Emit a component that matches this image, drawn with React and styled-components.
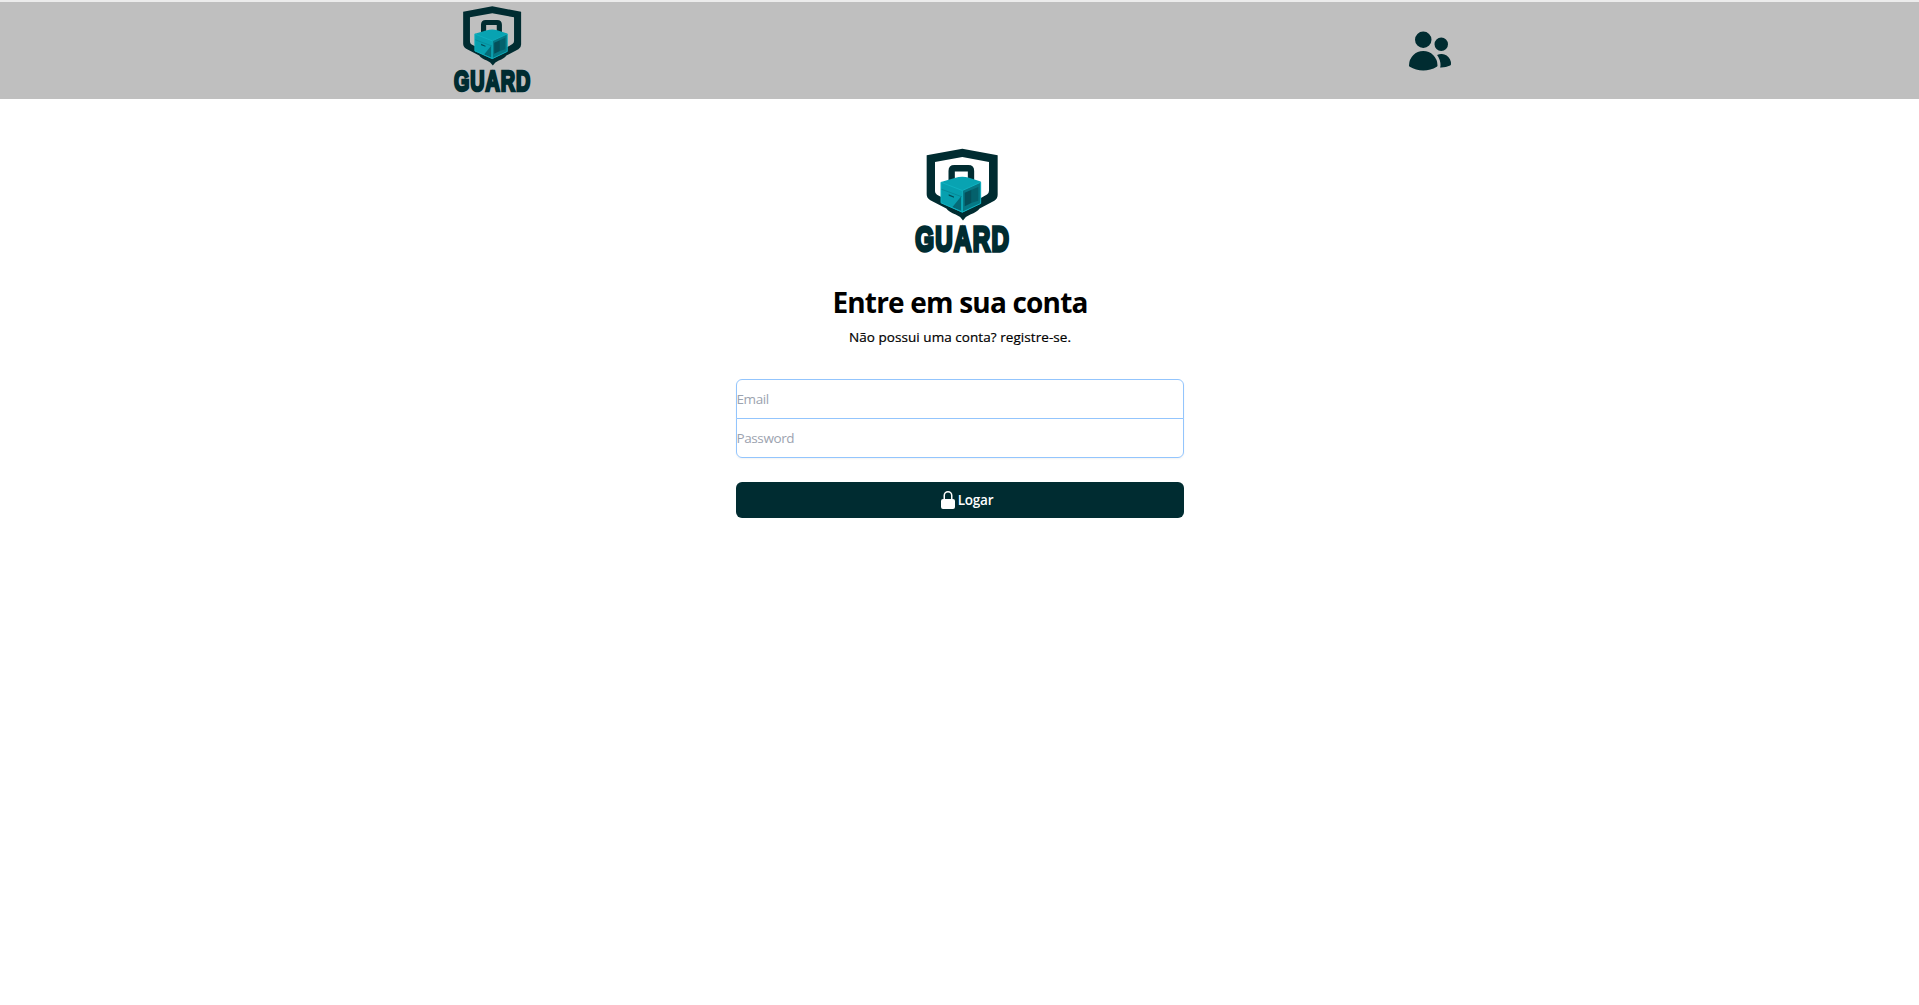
import React from "react";
import styled, { createGlobalStyle } from "styled-components";
import { HiUsers } from "react-icons/hi2";

const ink = "#002c31";

const GlobalStyle = createGlobalStyle`
  *, *::before, *::after { box-sizing: border-box; }
  body { margin: 0; background: #fff; color: #000; font-family: "Open Sans", "Noto Sans", sans-serif; }
  h1, p { margin: 0; }
`;

const Header = styled.header`
  display: flex;
  justify-content: space-between;
  align-items: center;
  height: 99px;
  padding: 0 465px 0 452px;
  border-top: 2px solid #ececec;
  background: #bfbfbf;
  color: ${ink};
`;

const HeaderLogo = styled.div`
  padding-top: 2px;
`;

const LogoSvg = styled.svg`
  display: block;
  width: ${(p) => p.$width}px;
  height: ${(p) => p.$height}px;
`;

const Main = styled.main`
  display: flex;
  flex-direction: column;
  align-items: center;
  padding-top: 48px;
`;

const LogoSlot = styled.div`
  padding-left: 5px;
`;

const Title = styled.h1`
  margin-top: 24px;
  padding-left: 1px;
  font-size: 28px;
  line-height: 36px;
  font-weight: 700;
  letter-spacing: -0.81px;
  white-space: nowrap;
`;

const Subtitle = styled.p`
  margin-top: 7px;
  padding-left: 1px;
  font-size: 13.5px;
  line-height: 20px;
  font-weight: 500;
  letter-spacing: 0.06px;
  -webkit-text-stroke: 0.2px #000;
  white-space: nowrap;
`;

const Form = styled.form`
  display: flex;
  flex-direction: column;
  width: 448px;
  margin-top: 32px;
`;

const Fields = styled.div`
  display: flex;
  flex-direction: column;
  border-radius: 6px;
  box-shadow: 0 1px 2px rgba(0, 0, 0, 0.05);
`;

const Field = styled.input`
  width: 100%;
  height: 40px;
  margin: ${(p) => (p.$last ? "-1px 0 0" : "0")};
  padding: 0;
  border: 1px solid #93c5fd;
  border-radius: ${(p) => (p.$last ? "0 0 6px 6px" : "6px 6px 0 0")};
  background: #fff;
  font: 400 13.5px/20px "Open Sans", "Noto Sans", sans-serif;
  letter-spacing: -0.4px;
  outline: none;
  &::placeholder { color: #9ca3af; opacity: 1; }
`;

const Submit = styled.button`
  display: flex;
  align-items: center;
  justify-content: center;
  height: 36px;
  margin-top: 24px;
  padding: 0 0 0 12px;
  border: 0;
  border-radius: 6px;
  background: ${ink};
  color: #fff;
  font: 600 13.5px/20px "Open Sans", "Noto Sans", sans-serif;
  letter-spacing: -0.2px;
`;

function LockIcon() {
  return (
    <svg width="20" height="20" viewBox="0 0 20 20" fill="currentColor">
      <path fillRule="evenodd" clipRule="evenodd" d="M10 1a4.5 4.5 0 0 0-4.5 4.5V9H5a2 2 0 0 0-2 2v6a2 2 0 0 0 2 2h10a2 2 0 0 0 2-2v-6a2 2 0 0 0-2-2h-.5V5.5A4.5 4.5 0 0 0 10 1Zm3 8V5.5a3 3 0 1 0-6 0V9h6Z" />
    </svg>
  );
}

function Logo({ width, height }) {
  return (
    <LogoSvg $width={width} $height={height} viewBox="40 20 294 340" preserveAspectRatio="none">
      <path fill={ink} fillRule="evenodd" d="M188 25 L294 45 V164 Q294 176 284 182 L240 205 Q232 216 212 223 Q198 228 190 241 Q182 228 168 223 Q148 216 140 205 L92 180 Q81 174 81 162 V45Z M188 50 L106 65 V153 Q106 160 112 164 L150 184 H225 L262 163 Q268 159 268 152 V65Z" />
      <path d="M156 127 V92 Q156 84 164 84 H206 Q214 84 214 92 V127" fill="none" stroke={ink} strokeWidth="19" />
      <path fill="#08a3b2" d="M124 125 L165 113 Q187 107 206 112 L243 124 V190 L188 217 L124 188Z" />
      <path fill="#07a0af" d="M124 126 L187 151 V216 L124 188Z" />
      <path fill="#067885" d="M188 151 L243 126 V190 L188 216Z" />
      <path fill="#04505b" d="M195 158 L216 149 V188 L195 198Z" />
      <path fill="#04616c" d="M216 149 L236 140 V182 L216 188Z" />
      <path fill="#056b77" d="M184 169 V212 L158 201Z" />
      <path d="M124 126 L188 151 L243 126 V190 L188 216 L124 188Z M188 151 V216" fill="none" stroke="#10b2c1" strokeWidth="3" />
      <path d="M125 147 L187 170" stroke="#067f8c" strokeWidth="2" />
      <path d="M147 162 L163 169 V173 L147 167Z" fill="#034c56" />
      <text
        transform="translate(47 334) scale(0.672 1)"
        fill={ink}
        stroke={ink}
        strokeWidth="10"
        fontFamily="Liberation Sans, sans-serif"
        fontWeight="700"
        fontSize="108"
        letterSpacing="5.5"
      >
        GUARD
      </text>
    </LogoSvg>
  );
}

export default function App() {
  return (
    <>
      <GlobalStyle />
      <Header>
        <HeaderLogo><Logo width={80} height={93} /></HeaderLogo>
        <HiUsers size={48} />
      </Header>
      <Main>
        <LogoSlot><Logo width={98} height={113} /></LogoSlot>
        <Title>Entre em sua conta</Title>
        <Subtitle>Não possui uma conta? registre-se.</Subtitle>
        <Form onSubmit={(e) => e.preventDefault()}>
          <Fields>
            <Field type="email" placeholder="Email" />
            <Field type="password" placeholder="Password" $last />
          </Fields>
          <Submit type="submit"><LockIcon />Logar</Submit>
        </Form>
      </Main>
    </>
  );
}
